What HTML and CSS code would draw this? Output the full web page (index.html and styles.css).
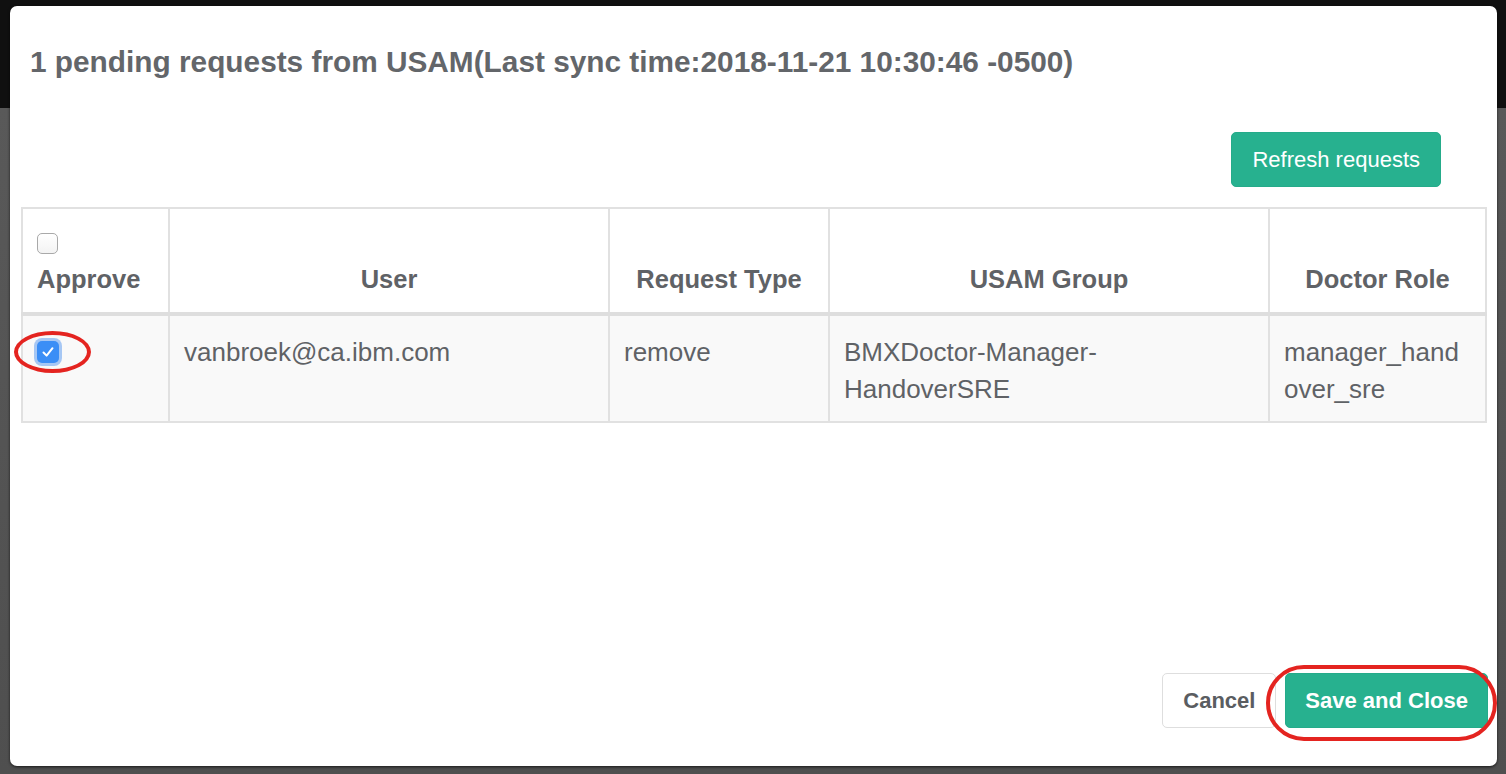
FILE: index.html
```html
<!DOCTYPE html>
<html>
<head>
<meta charset="utf-8">
<link rel="stylesheet" href="styles.css">
</head>
<body>
<div class="modal">
  <div class="modal-header">
    <h4 class="title">1 pending requests from USAM(Last sync time:2018-11-21 10:30:46 -0500)</h4>
  </div>
  <div class="toolbar">
    <button class="btn btn-green btn-refresh">Refresh requests</button>
  </div>
  <table class="req-table">
    <colgroup>
      <col class="c1"><col class="c2"><col class="c3"><col class="c4"><col class="c5">
    </colgroup>
    <thead>
      <tr>
        <th class="th-left"><span class="cb"></span>Approve</th>
        <th>User</th>
        <th>Request Type</th>
        <th>USAM Group</th>
        <th>Doctor Role</th>
      </tr>
    </thead>
    <tbody>
      <tr>
        <td><span class="cb cb-checked"><svg viewBox="0 0 22 22" width="22" height="22"><path d="M6.5 11.5 L9.6 14.6 L15.5 7.2" fill="none" stroke="#fff" stroke-width="2" stroke-linecap="round" stroke-linejoin="round"/></svg></span></td>
        <td>vanbroek@ca.ibm.com</td>
        <td>remove</td>
        <td>BMXDoctor-Manager-HandoverSRE</td>
        <td>manager_hand<wbr>over_sre</td>
      </tr>
    </tbody>
  </table>
  <div class="footer">
    <button class="btn btn-default">Cancel</button>
    <button class="btn btn-green btn-bold">Save and Close</button>
  </div>
</div>
<div class="ring ring-check"></div>
<div class="ring ring-save"></div>
</body>
</html>
```

FILE: styles.css
```css
html, body {
  margin: 0;
  padding: 0;
}
body {
  width: 1506px;
  height: 774px;
  overflow: hidden;
  position: relative;
  font-family: "Liberation Sans", Arial, sans-serif;
  background: linear-gradient(to bottom, #101010 0, #101010 108px, #595959 108px, #4f4f4f 774px);
  padding-top: 6px;
  box-sizing: border-box;
}
.modal {
  margin-left: 10px;
  width: 1487px;
  height: 760px;
  background: #fff;
  border-radius: 7px;
  box-shadow: 0 1px 3px rgba(0,0,0,0.7);
  display: flex;
  flex-direction: column;
  box-sizing: border-box;
}
.modal-header {
  padding: 38px 0 0 20px;
}
.title {
  margin: 0;
  font-size: 29.8px;
  line-height: 36px;
  font-weight: bold;
  color: #63666a;
  white-space: nowrap;
}
.toolbar {
  display: flex;
  justify-content: flex-end;
  padding-right: 56px;
  margin-top: 52px;
}
.btn {
  font-family: "Liberation Sans", Arial, sans-serif;
  font-size: 22px;
  height: 55px;
  padding: 0 21px;
  border-radius: 5px;
  border: 1px solid transparent;
  cursor: pointer;
  white-space: nowrap;
}
.btn-refresh {
  padding: 0 20px;
}
.btn-green {
  background: #27b18f;
  color: #fff;
  border-color: #25ab8a;
}
.btn-bold {
  font-weight: bold;
  padding: 0 19px;
}
.btn-default {
  background: #fff;
  border-color: #dedede;
  color: #5a5d61;
  font-weight: bold;
  width: 114px;
  padding: 0;
}
.req-table {
  margin: 20px 0 0 11px;
  width: 1464px;
  table-layout: fixed;
  border-collapse: collapse;
  color: #5f6266;
}
.c1 { width: 147px; }
.c2 { width: 440px; }
.c3 { width: 220px; }
.c4 { width: 440px; }
.c5 { width: 217px; }
.req-table th, .req-table td {
  border: 2px solid #e1e1e1;
  padding: 16px 14px 16px 14px;
  line-height: 37px;
}
.req-table th {
  font-size: 25.5px;
  font-weight: bold;
  text-align: center;
  vertical-align: bottom;
  border-bottom: 4px solid #dedede;
  padding-bottom: 14px;
}
.req-table th.th-left {
  text-align: left;
}
.req-table td {
  font-size: 26px;
  vertical-align: top;
  background: #f9f9f9;
  padding-top: 18px;
  padding-bottom: 13px;
}
.cb {
  display: block;
  box-sizing: border-box;
  width: 21px;
  height: 21px;
  margin: 8px 0 7px 0;
  border: 1px solid #a9a9a9;
  border-radius: 5px;
  background: linear-gradient(#ffffff, #f3f3f3);
}
.cb-checked {
  width: 22px;
  height: 22px;
  margin: 7px 0 0 0;
  border: none;
  background: #3b8ef6;
  box-shadow: 0 0 0 3px rgba(110, 165, 240, 0.6);
  border-radius: 5px;
}
.cb-checked svg {
  display: block;
}
.footer {
  margin-top: auto;
  display: flex;
  justify-content: flex-end;
  gap: 9px;
  padding: 0 9px 38px 0;
}
.ring {
  position: absolute;
  border: 4px solid #e42420;
  box-sizing: border-box;
}
.ring-check {
  left: 14px;
  top: 331px;
  width: 77px;
  height: 42px;
  border-radius: 50%;
}
.ring-save {
  left: 1266px;
  top: 665px;
  width: 231px;
  height: 76px;
  border-radius: 38px / 38px;
}
```
